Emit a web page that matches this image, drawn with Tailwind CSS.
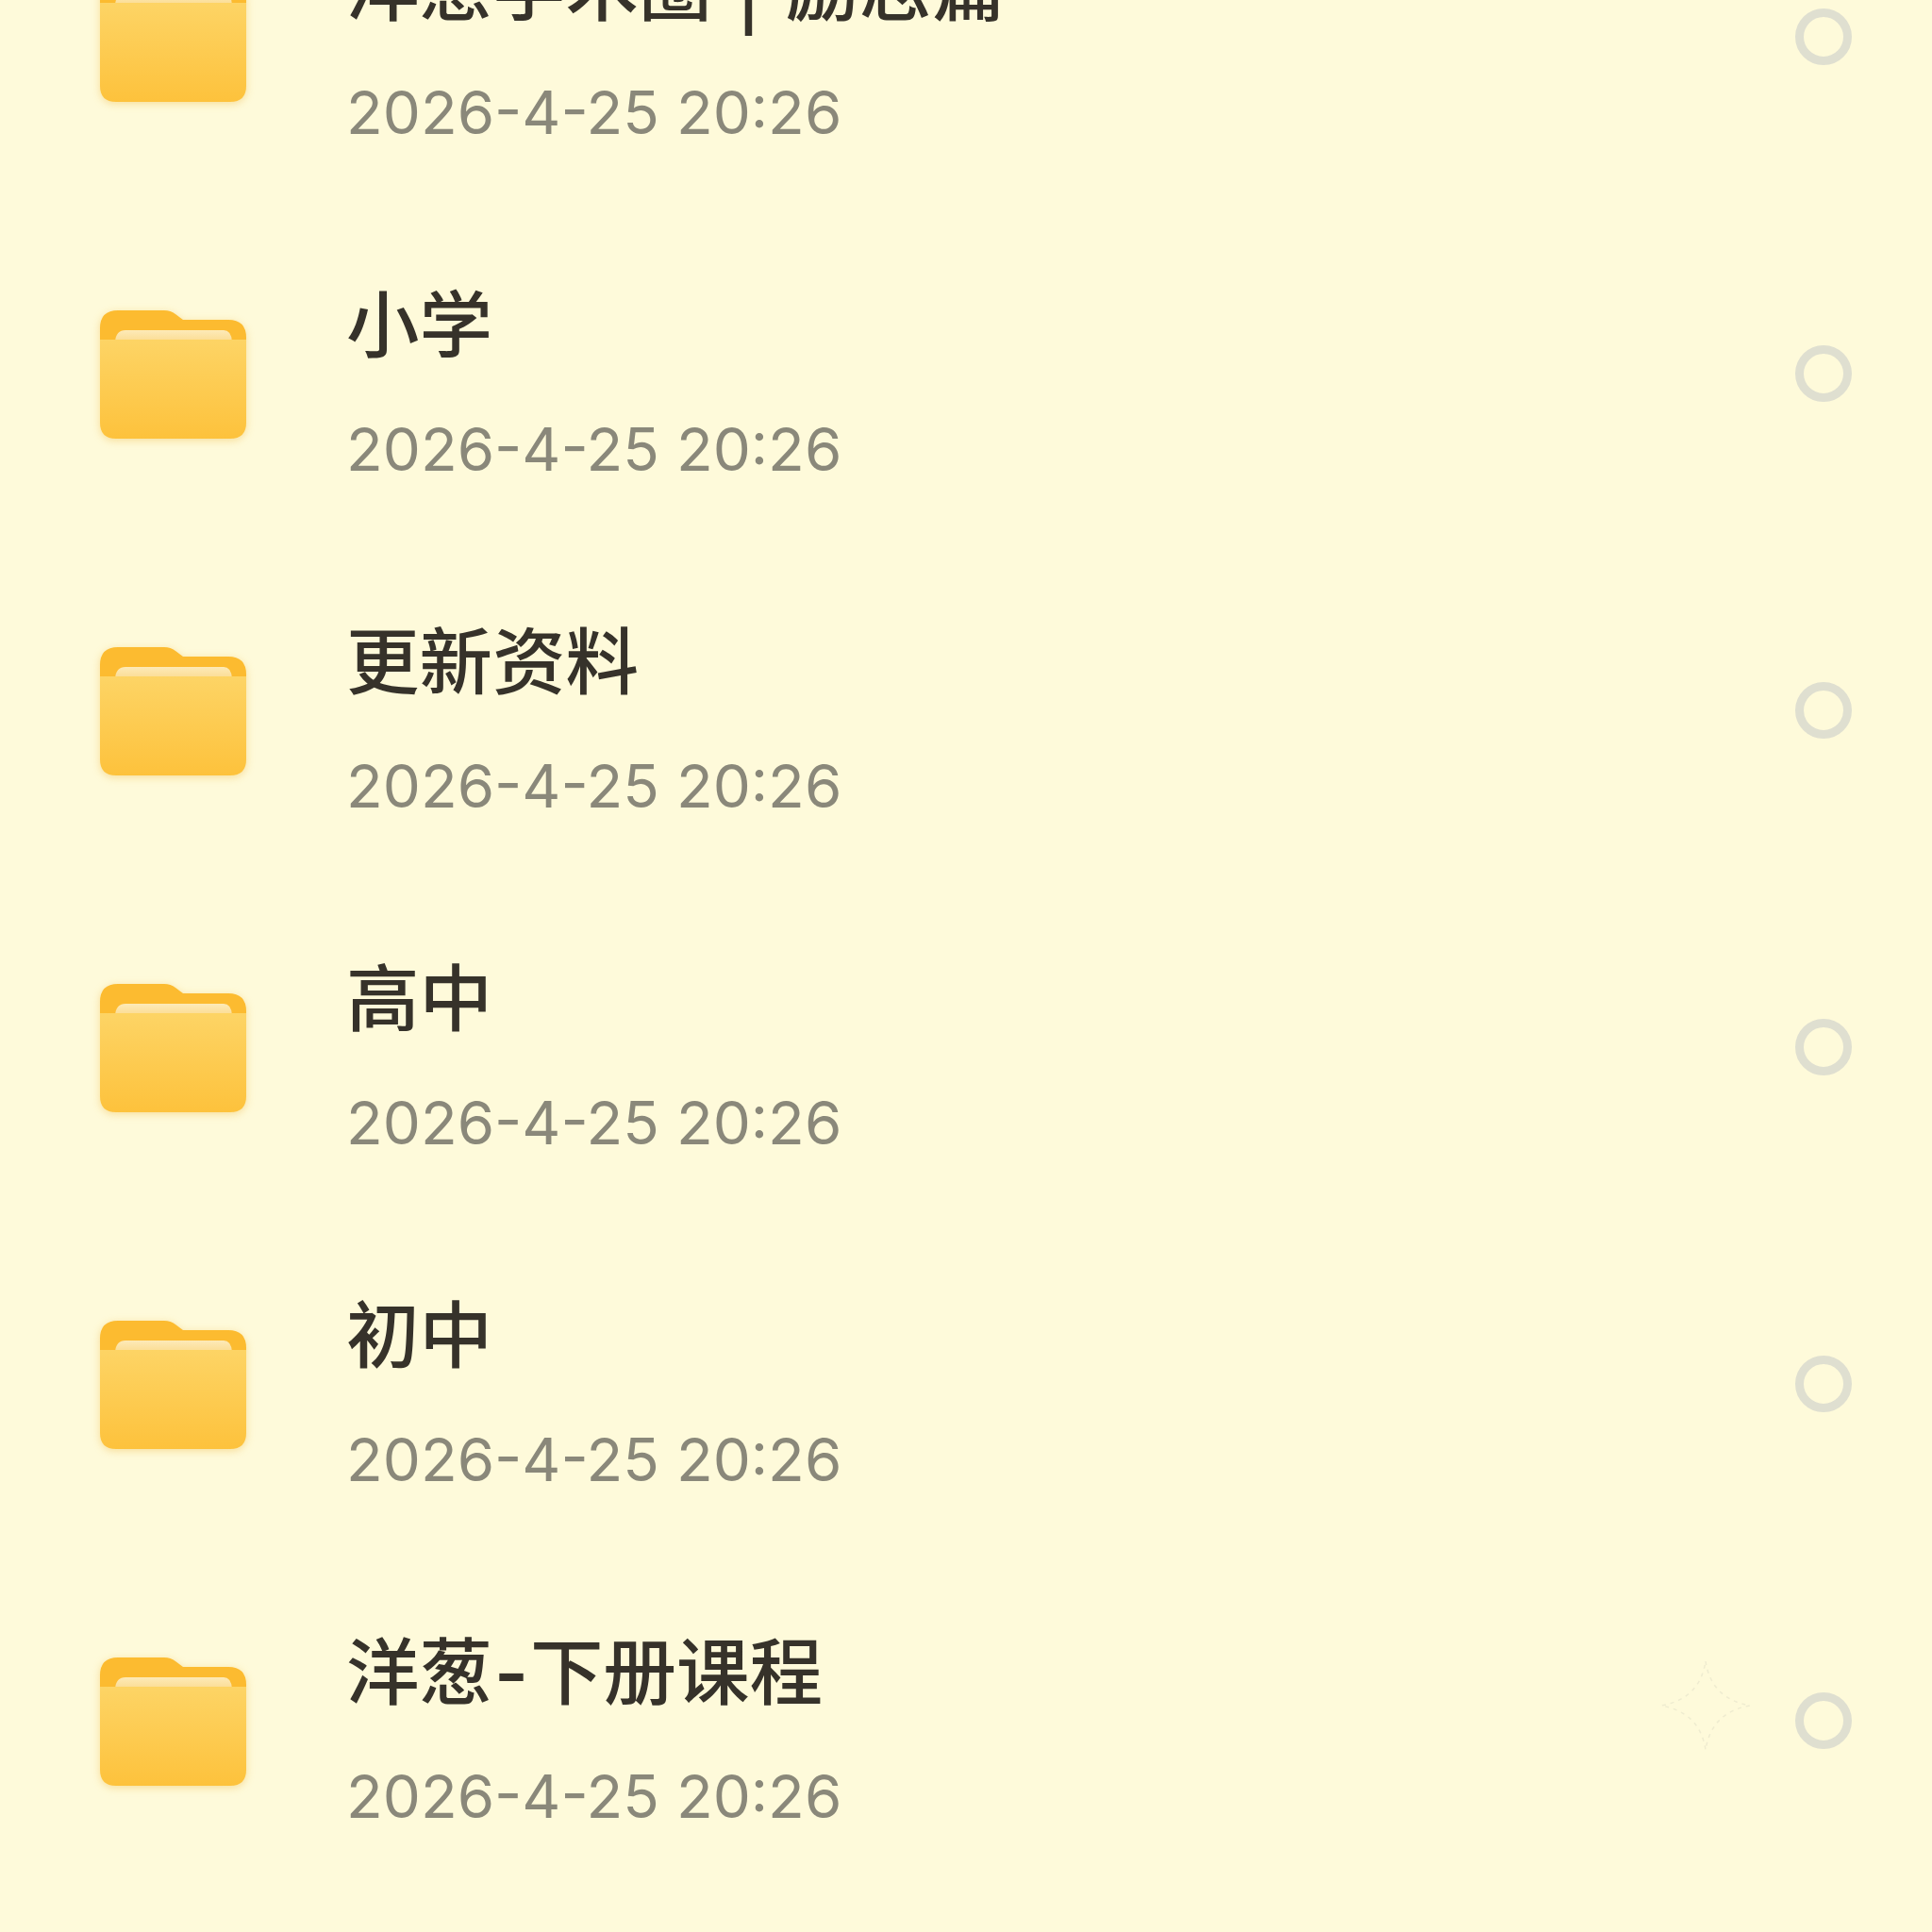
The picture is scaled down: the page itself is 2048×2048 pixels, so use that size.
<!DOCTYPE html>
<html lang="zh-CN">
<head>
    <meta charset="UTF-8">
    <title>文件列表</title>
    <script src="https://cdn.jsdelivr.net/npm/@tailwindcss/browser@4"></script>
</head>
<body class="bg-[#fefada] font-['Inter','Noto_Sans_CJK_SC',sans-serif]">
    <div class="relative h-[2048px] w-[2048px] overflow-hidden">
        <main class="-mt-[140px] flex flex-col">

            <!-- Row -->
            <div class="flex h-[357px] items-center pl-[106px] pr-[85px]">
                <svg class="mt-[2px] h-[138px] w-[156px] shrink-0 blur-[0.6px] drop-shadow-[0_2px_4px_rgba(235,170,30,0.35)]" viewBox="0 0 156 138"><use href="#folder"/></svg>
                <div class="ml-[105px] flex-1 pt-[11px]">
                    <p class="text-[77.5px] leading-[100px] font-medium text-[#36322a] font-['Noto_Sans_CJK_SC',sans-serif]">洋葱学术圈<span class="mx-[10px] font-bold"> | </span>励志篇</p>
                    <p class="mt-[49px] text-[63.6px] leading-[76px] text-[#8a887a]">2026-4-25 20:26</p>
                </div>
                <div class="h-[60px] w-[60px] rounded-full border-[9px] border-[#dfdfd0]"></div>
            </div>

            <div class="flex h-[357px] items-center pl-[106px] pr-[85px]">
                <svg class="mt-[2px] h-[138px] w-[156px] shrink-0 blur-[0.6px] drop-shadow-[0_2px_4px_rgba(235,170,30,0.35)]" viewBox="0 0 156 138"><use href="#folder"/></svg>
                <div class="ml-[105px] flex-1 pt-[11px]">
                    <p class="text-[77.5px] leading-[100px] font-medium text-[#36322a] font-['Noto_Sans_CJK_SC',sans-serif]">小学</p>
                    <p class="mt-[49px] text-[63.6px] leading-[76px] text-[#8a887a]">2026-4-25 20:26</p>
                </div>
                <div class="h-[60px] w-[60px] rounded-full border-[9px] border-[#dfdfd0]"></div>
            </div>

            <div class="flex h-[357px] items-center pl-[106px] pr-[85px]">
                <svg class="mt-[2px] h-[138px] w-[156px] shrink-0 blur-[0.6px] drop-shadow-[0_2px_4px_rgba(235,170,30,0.35)]" viewBox="0 0 156 138"><use href="#folder"/></svg>
                <div class="ml-[105px] flex-1 pt-[11px]">
                    <p class="text-[77.5px] leading-[100px] font-medium text-[#36322a] font-['Noto_Sans_CJK_SC',sans-serif]">更新资料</p>
                    <p class="mt-[49px] text-[63.6px] leading-[76px] text-[#8a887a]">2026-4-25 20:26</p>
                </div>
                <div class="h-[60px] w-[60px] rounded-full border-[9px] border-[#dfdfd0]"></div>
            </div>

            <div class="flex h-[357px] items-center pl-[106px] pr-[85px]">
                <svg class="mt-[2px] h-[138px] w-[156px] shrink-0 blur-[0.6px] drop-shadow-[0_2px_4px_rgba(235,170,30,0.35)]" viewBox="0 0 156 138"><use href="#folder"/></svg>
                <div class="ml-[105px] flex-1 pt-[11px]">
                    <p class="text-[77.5px] leading-[100px] font-medium text-[#36322a] font-['Noto_Sans_CJK_SC',sans-serif]">高中</p>
                    <p class="mt-[49px] text-[63.6px] leading-[76px] text-[#8a887a]">2026-4-25 20:26</p>
                </div>
                <div class="h-[60px] w-[60px] rounded-full border-[9px] border-[#dfdfd0]"></div>
            </div>

            <div class="flex h-[357px] items-center pl-[106px] pr-[85px]">
                <svg class="mt-[2px] h-[138px] w-[156px] shrink-0 blur-[0.6px] drop-shadow-[0_2px_4px_rgba(235,170,30,0.35)]" viewBox="0 0 156 138"><use href="#folder"/></svg>
                <div class="ml-[105px] flex-1 pt-[11px]">
                    <p class="text-[77.5px] leading-[100px] font-medium text-[#36322a] font-['Noto_Sans_CJK_SC',sans-serif]">初中</p>
                    <p class="mt-[49px] text-[63.6px] leading-[76px] text-[#8a887a]">2026-4-25 20:26</p>
                </div>
                <div class="h-[60px] w-[60px] rounded-full border-[9px] border-[#dfdfd0]"></div>
            </div>

            <div class="flex h-[357px] items-center pl-[106px] pr-[85px]">
                <svg class="mt-[2px] h-[138px] w-[156px] shrink-0 blur-[0.6px] drop-shadow-[0_2px_4px_rgba(235,170,30,0.35)]" viewBox="0 0 156 138"><use href="#folder"/></svg>
                <div class="ml-[105px] flex-1 pt-[11px]">
                    <p class="text-[77.5px] leading-[100px] font-medium text-[#36322a] font-['Noto_Sans_CJK_SC',sans-serif]">洋葱<span class="mx-[2px] font-['Inter'] font-semibold leading-none">-</span>下册课程</p>
                    <p class="mt-[49px] text-[63.6px] leading-[76px] text-[#8a887a]">2026-4-25 20:26</p>
                </div>
                <div class="h-[60px] w-[60px] rounded-full border-[9px] border-[#dfdfd0]"></div>
            </div>
        </main>

        <!-- Faint sparkle over the last row -->
        <svg class="absolute left-[1759px] top-[1759px] h-[98px] w-[98px]" viewBox="0 0 98 98" fill="none">
            <path d="M49 2 C53 28 68 44 96 49 C68 54 53 70 49 96 C45 70 30 54 2 49 C30 44 45 28 49 2 Z" stroke="#efecd0" stroke-width="1.5" stroke-dasharray="4 5"/>
        </svg>
    </div>

    <!-- Folder icon -->
    <svg class="absolute h-0 w-0">
        <defs>
            <linearGradient id="folderFront" x1="0" y1="0" x2="0" y2="1">
                <stop offset="0" stop-color="#fdd465"/>
                <stop offset="1" stop-color="#fdc23c"/>
            </linearGradient>
            <linearGradient id="folderSheet" x1="0" y1="0" x2="0" y2="1">
                <stop offset="0" stop-color="#fdeab8"/>
                <stop offset="1" stop-color="#fbdc92"/>
            </linearGradient>
            <symbol id="folder" viewBox="0 0 156 138">
                <path d="M0 34 V20 Q0 1 19 1 H68 Q75 1 80 5 L88 11 H136 Q155 11 155 30 V40 H0 Z" fill="#fcbb30"/>
                <path d="M16 34 Q17 22 27 22 H131 Q139 22 140 34 Z" fill="url(#folderSheet)"/>
                <path d="M0 32 H155 V120 Q155 137 138 137 H17 Q0 137 0 120 Z" fill="url(#folderFront)"/>
            </symbol>
        </defs>
    </svg>
</body>
</html>
